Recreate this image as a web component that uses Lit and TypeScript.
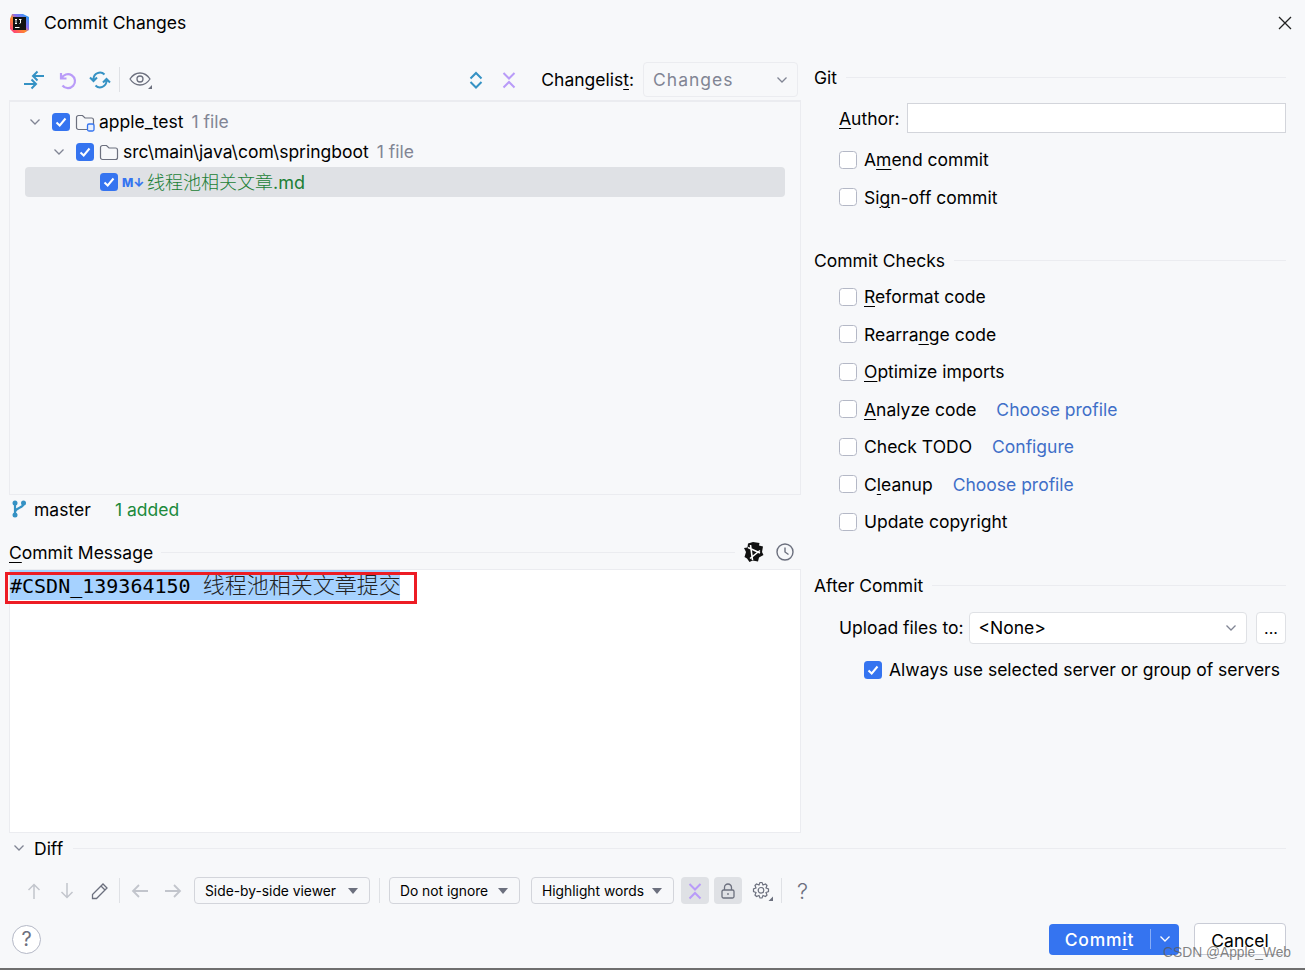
import { LitElement, html, css, svg } from 'lit';
import { customElement } from 'lit/decorators.js';

const icon = (w: number, body: unknown, cls = '') =>
  html`<svg class="ic ${cls}" width=${w} height=${w} viewBox="0 0 ${w} ${w}" fill="none">${body}</svg>`;

const BLUE = '#3592c4';
const PURPLE = '#b99bf8';
const GREY = '#6c707e';
const FAINT = '#c2c5cc';

const chevron = (cls = '') => html`<svg class="ic ${cls}" width="12" height="8" viewBox="0 0 12 8" fill="none"><path d="M1.500 1.500 6 6l4.500-4.500" stroke="#818594" stroke-width="1.300"/></svg>`;

const folder = () => svg`<path d="M1.500 5.500a2 2 0 0 1 2-2h4l2.500 2.500h6.500a2 2 0 0 1 2 2v7.500a2 2 0 0 1-2 2h-13a2 2 0 0 1-2-2z" stroke="#6c707e" stroke-width="1.200" fill="none"/>`;

const check = (on: boolean) => html`<span class="cb ${on ? 'on' : ''}">${on
  ? html`<svg width="18" height="18" viewBox="0 0 18 18" fill="none"><path d="M4.500 9.500 7.700 12.500 13.500 5.500" stroke="#fff" stroke-width="2"/></svg>`
  : ''}</span>`;

const collapseIcon = (c: string) => icon(18, svg`<path d="M3.500 2l5.500 5.500L14.500 2M3.500 16.500 9 11l5.500 5.500" stroke=${c} stroke-width="2"/>`);

@customElement('app-root')
export class AppRoot extends LitElement {
  static styles = css`
    :host {
      display: block;
      position: relative;
      width: 1305px;
      height: 970px;
      overflow: hidden;
      background: #f7f8fa;
      color: #000;
      font-family: Inter, 'Noto Sans CJK SC', sans-serif;
      font-size: 17.500px;
      box-sizing: border-box;
      border-bottom: 2px solid #6f6f6f;
    }
    * { box-sizing: border-box; }
    u { text-underline-offset: 3px; text-decoration-thickness: 1px; }
    .ic { display: block; flex: none; }

    .title {
      height: 46px;
      display: flex;
      align-items: center;
      padding: 0 12px 0 9px;
    }
    .title span { margin: 0 0 2px 14px; flex: 1; }

    .main { display: grid; grid-template-columns: 801px minmax(0, 1fr); height: 786px; }
    .left { padding-left: 9px; display: flex; flex-direction: column; min-width: 0; }
    .tools {
      height: 54px;
      display: flex;
      align-items: center;
      padding: 16px 3px 3px 8px;
    }
    .tbtn { width: 33px; display: flex; justify-content: center; flex: none; }
    .sep { width: 1px; height: 25px; background: #dfe1e5; flex: none; }
    .spacer { flex: 1; }
    .combo {
      height: 35px;
      border: 1.500px solid #ebecf0;
      border-radius: 4px;
      display: flex;
      align-items: center;
      justify-content: space-between;
      padding: 0 9px;
      margin-left: 9px;
      width: 155px;
      color: #818594;
      letter-spacing: 1px;
    }
    .tree {
      height: 395px;
      border: 1px solid #ebecf0;
      border-width: 2px 1px 1px 1px;
      padding-top: 5px;
      padding-left: 15px;
      padding-right: 15px;
    }
    .row { height: 30px; display: flex; align-items: center; border-radius: 4px; white-space: nowrap; }
    .row.sel { background: #dfe1e5; }
    .r1 { padding-left: 4px; }
    .r2 { padding-left: 28px; }
    .r3 { padding-left: 75px; }
    .row .cb { margin: 0 5px 0 11px; }
    .r3 .cb { margin: 0 4px 0 0; }
    .row .name { margin: 0 0 1px 4px; }
    .row .count { color: #818594; margin: 0 0 1px 8px; }
    .md { font-size: 12px; font-weight: 800; color: #3574f0; width: 21px; letter-spacing: 0; }
    .green { color: #1b7f35; margin: 0 0 2px 4px; font-size: 18px; font-weight: 300; }
    .green b { font-weight: 400; }

    .cb {
      width: 18px;
      height: 18px;
      border: 1.500px solid #b4b8c6;
      border-radius: 3.500px;
      background: #fff;
      flex: none;
      display: inline-block;
      position: relative;
    }
    .cb.on { background: #3574f0; border: none; }
    .cb svg { display: block; }

    .branch {
      height: 30px;
      display: flex;
      align-items: center;
      padding: 0 0 2px 3px;
    }
    .branch .m { margin-left: 8px; width: 81px; }
    .added { color: #208a3c; }
    .head {
      margin-top: 12px;
      height: 30px;
      display: flex;
      align-items: center;
      gap: 8px;
    }
    .rule { flex: 1; height: 1px; background: #ebecf0; }
    .editor {
      height: 264px;
      margin-top: 2px;
      background: #fff;
      border: 1px solid #ebecf0;
    }
    .msg {
      display: block;
      width: 390px;
      background: #a6d2ff;
      height: 30px;
      line-height: 26px;
      white-space: nowrap;
      font-family: 'DejaVu Sans Mono', 'Noto Sans CJK SC', monospace;
      font-size: 20px;
    }
    .msg .cjk { font-family: 'Noto Sans CJK SC', sans-serif; font-size: 22px; font-weight: 300; color: #222; }

    .right { padding: 19px 19px 0 13px; display: flex; flex-direction: column; min-width: 0; }
    .sect { height: 24px; display: flex; align-items: center; gap: 9px; }
    .opts { padding-left: 25px; }
    .opts.list { margin-top: 6px; }
    .opt { height: 37.500px; display: flex; align-items: center; white-space: nowrap; }
    .opt .cb { margin-right: 7px; }
    .opt a { color: #3f6fc8; margin-left: 20px; }
    .author { display: flex; align-items: center; height: 32px; margin: 13px 0 7px 25px; gap: 7px; }
    .input { flex: 1; height: 30px; background: #fff; border: 1.500px solid #d3d5db; }
    .checks { margin-top: 32px; }
    .after { margin-top: 33px; }
    .upload { display: flex; align-items: center; height: 32px; margin: 14px 0 11px 25px; }
    .select {
      flex: 1;
      height: 32px;
      margin-left: 5px;
      background: #fff;
      border: 1.500px solid #dfe1e5;
      border-radius: 4px;
      display: flex;
      align-items: center;
      justify-content: space-between;
      padding: 0 9px;
    }
    .more {
      width: 30px;
      height: 32px;
      margin-left: 9px;
      background: #fff;
      border: 1.500px solid #dfe1e5;
      border-radius: 4px;
      text-align: center;
      line-height: 30px;
      font-size: 16px;
    }
    .always { margin-left: 25px; }
    .always .opt { height: 30px; }

    .diff { height: 24px; margin-top: 4px; padding: 0 19px 0 13px; display: flex; align-items: center; }
    .diff .lbl { margin: 0 10px 0 9px; }
    .dtools { height: 27px; margin-top: 17px; display: flex; align-items: center; padding-left: 17px; }
    .dtools .tbtn { width: 33px; }
    .dcombo {
      height: 27px;
      border: 1.500px solid #d3d5db;
      border-radius: 4px;
      display: flex;
      align-items: center;
      justify-content: space-between;
      padding: 0 11px 0 10px;
      font-size: 13.800px;
      flex: none;
    }
    .tri { width: 0; height: 0; border: 5px solid transparent; border-top: 6px solid #6c707e; border-bottom: 0; }
    .toggle { width: 28px; height: 27px; border-radius: 4px; background: #dfe1e5; display: flex; align-items: center; justify-content: center; flex: none; }
    .qmark { margin-left: 15px; color: #6c707e; font-size: 22px; font-weight: 300; }

    .foot { display: flex; align-items: center; height: 32px; margin-top: 19px; padding: 0 19px 0 12px; }
    .help {
      width: 29px;
      height: 29px;
      border: 1px solid #b4b8c6;
      border-radius: 50%;
      background: #fff;
      text-align: center;
      line-height: 27px;
      color: #6c707e;
      font-size: 20px;
    }
    .commit {
      width: 130px;
      height: 31px;
      background: #3574f0;
      border-radius: 4px;
      color: #fff;
      display: flex;
      align-items: center;
      font-weight: 500;
      letter-spacing: 0.800px;
    }
    .commit span { width: 101px; text-align: center; }
    .commit i { width: 1px; height: 20px; background: #88adf7; }
    .commit .ic { margin-left: 8px; }
    .cancel {
      width: 92px;
      height: 32px;
      margin-left: 15px;
      background: #fff;
      border: 1.500px solid #c9ccd6;
      border-radius: 4px;
      text-align: center;
      line-height: 33px;
    }

    /* annotation and watermark drawn on top of the screenshot */
    .redbox {
      position: absolute;
      left: 5px;
      top: 572px;
      width: 412px;
      height: 32px;
      border: 3px solid #ed1c24;
    }
    .mark {
      position: absolute;
      left: 1163px;
      top: 945px;
      font: 13.800px 'Liberation Sans', sans-serif;
      color: rgba(90, 90, 90, 0.75);
      white-space: nowrap;
    }
  `;

  render() {
    return html`
      <div class="title">
        <svg class="ic" width="21" height="21" viewBox="0 0 21 21">
          <defs>
            <linearGradient id="ij" x1="0" y1="1" x2="1" y2="0"><stop offset="0" stop-color="#ff2d90"/><stop offset=".45" stop-color="#ff8a2a"/><stop offset=".6" stop-color="#8a6cf0"/><stop offset="1" stop-color="#16a6f5"/></linearGradient>
          </defs>
          <path d="M3 1h11l6 3v13l-5 3H5l-4-4V6z" fill="url(#ij)"/>
          <rect x="4" y="4" width="13" height="13" fill="#111"/>
          <path d="M6 6.500h2M7 6.500v4M6 10.500h2M10 6.500h2.500M11.500 6.500v3.500l-1 .5M6 14.500h4.500" stroke="#fff" stroke-width="1" fill="none"/>
        </svg>
        <span>Commit Changes</span>
        <svg class="ic" width="16" height="16" viewBox="0 0 16 16"><path d="M2 2l12 12M14 2 2 14" stroke="#222" stroke-width="1.300"/></svg>
      </div>

      <div class="main">
        <div class="left">
          <div class="tools">
            <span class="tbtn">${icon(24, svg`<path d="M22 8H11M15.500 3.500 11 8l4.500 4.500M2 16h12M9.500 11.500 14 16l-4.500 4.500" stroke=${BLUE} stroke-width="2"/>`)}</span>
            <span class="tbtn">${icon(20, svg`<path d="M4 3v5.500h5.500M4.500 8.500A7 7 0 1 1 5.500 15.500" stroke=${PURPLE} stroke-width="2.200"/>`)}</span>
            <span class="tbtn">${icon(22, svg`<path d="M4.500 11.500V10a6.500 6.500 0 0 1 11-4.500M1 8.500l3.500 3.500L8 8.500M17.500 10.500V12a6.500 6.500 0 0 1-11 4.500M21 13.500 17.500 10 14 13.500" stroke=${BLUE} stroke-width="2"/>`)}</span>
            <span class="sep" style="margin-left:3px"></span>
            <span class="tbtn" style="width:41px">
              <svg class="ic" width="24" height="20" viewBox="0 0 24 20" fill="none">
                <path d="M1 9c3-4.500 6.500-6 10-6s7 1.500 10 6c-3 4.500-6.500 6-10 6S4 13.500 1 9z" stroke=${GREY} stroke-width="1.300"/>
                <circle cx="11" cy="9" r="3" stroke=${GREY} stroke-width="1.300"/>
                <path d="M23 15v4h-4z" fill=${GREY}/>
              </svg>
            </span>
            <span class="spacer"></span>
            <span class="tbtn">${icon(18, svg`<path d="M3.500 7.500 9 2l5.500 5.500M3.500 11 9 16.500 14.500 11" stroke=${BLUE} stroke-width="2"/>`)}</span>
            <span class="tbtn" style="margin-right:16px">${collapseIcon(PURPLE)}</span>
            <span>Changelis<u>t</u>:</span>
            <div class="combo"><span>Changes</span>${chevron()}</div>
          </div>

          <div class="tree">
            <div class="row r1">
              ${chevron()}${check(true)}
              <svg class="ic" width="20" height="20" viewBox="0 0 20 20" fill="none">${folder()}<rect x="12.500" y="12" width="6.500" height="7" rx="1.500" fill="#e7effd" stroke="#3574f0" stroke-width="1.300"/></svg>
              <span class="name">apple_test</span><span class="count">1 file</span>
            </div>
            <div class="row r2">
              ${chevron()}${check(true)}
              <svg class="ic" width="20" height="20" viewBox="0 0 20 20" fill="none">${folder()}</svg>
              <span class="name">src\\main\\java\\com\\springboot</span><span class="count">1 file</span>
            </div>
            <div class="row r3 sel">
              ${check(true)}
              <span class="md">M↓</span><span class="green">线程池相关文章<b>.md</b></span>
            </div>
          </div>

          <div class="branch">
            <svg class="ic" width="14" height="18" viewBox="0 0 14 18" fill="none">
              <circle cx="3" cy="3" r="2.500" fill=${BLUE}/><circle cx="3" cy="15" r="2.500" fill=${BLUE}/><circle cx="11.500" cy="3" r="2.500" fill=${BLUE}/>
              <path d="M3 3v12M11.500 4c0 4-8 3.500-8.500 8" stroke=${BLUE} stroke-width="2.200"/>
            </svg>
            <span class="m">master</span>
            <span class="added">1 added</span>
          </div>

          <div class="head">
            <span><u>C</u>ommit Message</span>
            <span class="rule"></span>
            <svg class="ic" width="22" height="22" viewBox="0 0 22 22">
              <path d="M5 2.500 10 1l6.500 1-.5 2.500 4 1-1 5.500 1.500 3-4.500 2.500-1 4-5.500-1-3 1.500-2.500-3.500L1.500 16 3 11 1 7l3.500-.5z" fill="#111"/>
              <path d="M5 6.500 17 12M17 9.500 7 17.500M9.500 19 7.500 4" stroke="#fff" stroke-width="1.600" fill="none"/>
            </svg>
            <svg class="ic" style="margin:0 6px 0 2px" width="20" height="20" viewBox="0 0 20 20" fill="none">
              <circle cx="10" cy="10" r="8" stroke=${GREY} stroke-width="1.400"/>
              <path d="M10 5.500V10l3.500 2.500" stroke=${GREY} stroke-width="1.400"/>
            </svg>
          </div>
          <div class="editor">
            <span class="msg">#CSDN_139364150 <span class="cjk">线程池相关文章提交</span></span>
          </div>
        </div>

        <div class="right">
          <div class="sect"><span>Git</span><span class="rule"></span></div>
          <div class="author"><span><u>A</u>uthor:</span><div class="input"></div></div>
          <div class="opts">
            <div class="opt">${check(false)}<span>A<u>m</u>end commit</span></div>
            <div class="opt">${check(false)}<span>Si<u>g</u>n-off commit</span></div>
          </div>

          <div class="sect checks"><span>Commit Checks</span><span class="rule"></span></div>
          <div class="opts list">
            <div class="opt">${check(false)}<span><u>R</u>eformat code</span></div>
            <div class="opt">${check(false)}<span>Rearra<u>n</u>ge code</span></div>
            <div class="opt">${check(false)}<span><u>O</u>ptimize imports</span></div>
            <div class="opt">${check(false)}<span><u>A</u>nalyze code</span><a>Choose profile</a></div>
            <div class="opt">${check(false)}<span>Check TODO</span><a>Configure</a></div>
            <div class="opt">${check(false)}<span>C<u>l</u>eanup</span><a>Choose profile</a></div>
            <div class="opt">${check(false)}<span>Update copyright</span></div>
          </div>

          <div class="sect after"><span>After Commit</span><span class="rule"></span></div>
          <div class="upload">
            <span>Upload files to:</span>
            <div class="select"><span>&lt;None&gt;</span>${chevron()}</div>
            <div class="more">...</div>
          </div>
          <div class="opts always"><div class="opt">${check(true)}<span>Always use selected server or group of servers</span></div></div>
        </div>
      </div>

      <div class="diff">
        ${chevron()}<span class="lbl">Diff</span><span class="rule"></span>
      </div>

      <div class="dtools">
        <span class="tbtn">${icon(18, svg`<path d="M9 17V2.500M3.500 8 9 2.500 14.500 8" stroke=${FAINT} stroke-width="1.500"/>`)}</span>
        <span class="tbtn">${icon(18, svg`<path d="M9 1v14.500M3.500 10 9 15.500 14.500 10" stroke=${FAINT} stroke-width="1.500"/>`)}</span>
        <span class="tbtn">${icon(18, svg`<path d="M1.500 16.500v-4L12 2l4 4L5.500 16.500zM10 4l4 4" stroke=${GREY} stroke-width="1.300"/>`)}</span>
        <span class="sep" style="margin-left:3px"></span>
        <span class="tbtn" style="margin-left:3px">${icon(18, svg`<path d="M17 9H2M8 3 2 9l6 6" stroke=${FAINT} stroke-width="1.800"/>`)}</span>
        <span class="tbtn">${icon(18, svg`<path d="M1 9h15M10 3l6 6-6 6" stroke=${FAINT} stroke-width="1.800"/>`)}</span>
        <div class="dcombo" style="width:176px;margin-left:5px"><span>Side-by-side viewer</span><span class="tri"></span></div>
        <span class="sep" style="margin:0 9px"></span>
        <div class="dcombo" style="width:131px"><span>Do not ignore</span><span class="tri"></span></div>
        <div class="dcombo" style="width:143px;margin-left:11px"><span>Highlight words</span><span class="tri"></span></div>
        <span class="toggle" style="margin-left:7px">${collapseIcon(PURPLE)}</span>
        <span class="toggle" style="margin-left:5px">${icon(18, svg`<rect x="3" y="8" width="12" height="8" rx="1.500" stroke=${GREY} stroke-width="1.300"/><path d="M5.500 8V5.500a3.500 3.500 0 0 1 7 0V8M9 11v2" stroke=${GREY} stroke-width="1.300"/>`)}</span>
        <span style="margin-left:9px">
          <svg class="ic" width="22" height="20" viewBox="0 0 22 20" fill="none">
            <path d="M9 1.500h2l1 2.500 2.500-1 1.500 1.500-1 2.500 2.500 1v2.500l-2.500 1 1 2.500-1.500 1.500-2.500-1-1 2.500H9l-1-2.500-2.500 1L4 14l1-2.500-2.500-1V8l2.500-1-1-2.500L5.500 3 8 4z" stroke=${GREY} stroke-width="1.200"/>
            <circle cx="10" cy="9.300" r="2.800" stroke=${GREY} stroke-width="1.200"/>
            <path d="M22 15.500V20h-4.500z" fill=${GREY}/>
          </svg>
        </span>
        <span class="sep" style="margin-left:8px"></span>
        <span class="qmark">?</span>
      </div>

      <div class="foot">
        <div class="help">?</div>
        <span class="spacer"></span>
        <div class="commit"><span>Comm<u>i</u>t</span><i></i>
          <svg class="ic" width="12" height="8" viewBox="0 0 12 8" fill="none"><path d="M1.500 1.500 6 6l4.500-4.500" stroke="#fff" stroke-width="1.300"/></svg>
        </div>
        <div class="cancel">Cancel</div>
      </div>

      <div class="redbox"></div>
      <div class="mark">CSDN @Apple_Web</div>
    `;
  }
}
